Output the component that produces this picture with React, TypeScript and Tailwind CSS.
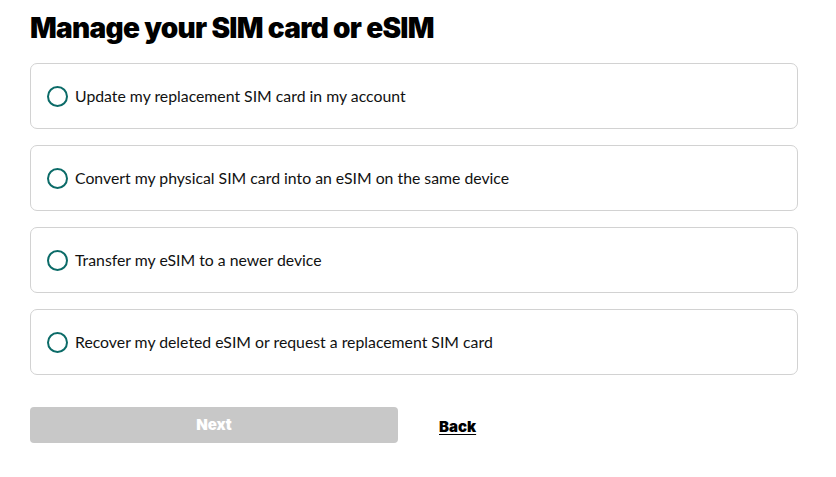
import React, { useState } from "react";

const options = [
  "Update my replacement SIM card in my account",
  "Convert my physical SIM card into an eSIM on the same device",
  "Transfer my eSIM to a newer device",
  "Recover my deleted eSIM or request a replacement SIM card",
];

const App: React.FC = () => {
  const [selected, setSelected] = useState<number | null>(null);

  return (
    <div className="min-h-screen w-full bg-white px-[30px] pt-[10px]" style={{ fontFamily: "Lato, 'Liberation Sans', sans-serif" }}>
      <h1
        className="text-[28px] font-black leading-[36px] tracking-[-0.7px] text-black"
        style={{ fontFamily: "Inter, 'Liberation Sans', sans-serif" }}
      >
        Manage your SIM card or eSIM
      </h1>

      <div className="mt-[17px] flex w-[768px] flex-col gap-[16px]">
        {options.map((label, i) => (
          <label
            key={label}
            className="flex h-[66px] cursor-pointer items-center gap-[7px] rounded-[7px] border border-[#d2d2d2] px-[16px]"
            onClick={() => setSelected(i)}
          >
            <span className="flex h-[21px] w-[21px] shrink-0 items-center justify-center rounded-full border-[2.5px] border-[#0b6b68]">
              {selected === i && <span className="h-[10px] w-[10px] rounded-full bg-[#0b6b68]" />}
            </span>
            <span className="text-[15.8px] text-[#111]">{label}</span>
          </label>
        ))}
      </div>

      <div className="mt-[32px] flex items-center">
        <button
          disabled={selected === null}
          className="h-[36px] w-[368px] rounded-[4px] bg-[#c8c8c8] text-[15px] font-black text-white"
          style={{ fontFamily: "Inter, 'Liberation Sans', sans-serif" }}
        >
          Next
        </button>
        <a
          href="#"
          className="ml-[41px] mt-[4px] text-[15px] font-black text-black underline underline-offset-2"
          style={{ fontFamily: "Inter, 'Liberation Sans', sans-serif" }}
        >
          Back
        </a>
      </div>
    </div>
  );
};

export default App;
